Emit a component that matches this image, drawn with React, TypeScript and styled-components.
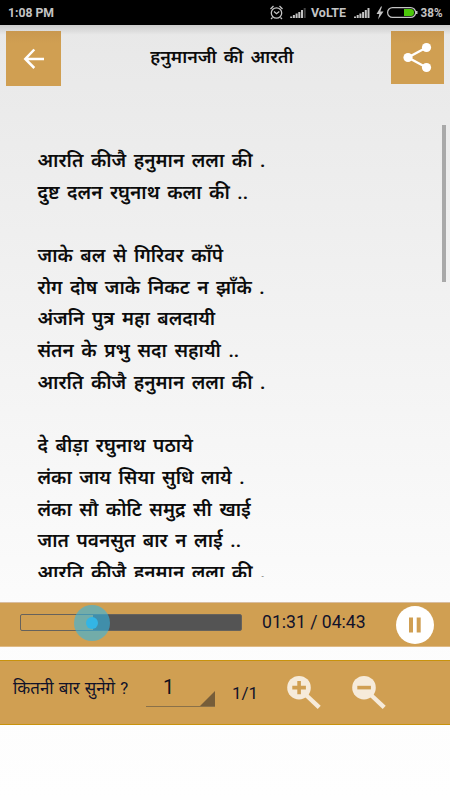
import React from "react";
import styled, { createGlobalStyle } from "styled-components";

const GlobalStyle = createGlobalStyle`
  * { box-sizing: border-box; }
  html, body { margin: 0; padding: 0; }
  body { overflow: hidden; }
`;

const deva = `Roboto, "Noto Sans", "Noto Sans Devanagari", sans-serif`;
const gold = "#d09f52";

const Screen = styled.div`
  width: 450px;
  height: 800px;
  display: flex;
  flex-direction: column;
  overflow: hidden;
  background: linear-gradient(#e8e8e8 25px, #fcfcfc 620px, #fefefe 100%);
  font-family: Roboto, sans-serif;
`;

const StatusBar = styled.div`
  height: 25px;
  flex: none;
  display: flex;
  align-items: center;
  justify-content: space-between;
  padding: 1px 8px 0;
  background: #000;
  color: #c4c4c4;
  font-size: 12.2px;
  font-weight: 700;
  line-height: 24px;
`;

const StatusIcons = styled.svg`
  display: block;
  width: 180px;
  height: 24px;
  margin-right: -8px;
  font-family: Roboto, sans-serif;
`;

const Header = styled.header`
  height: 100px;
  flex: none;
  display: flex;
  align-items: flex-start;
  justify-content: space-between;
  padding: 6px 6px 0;
  background: linear-gradient(rgba(0, 0, 0, 0.12), rgba(0, 0, 0, 0) 10px);
`;

const SquareButton = styled.button<{ $w: number; $h: number }>`
  width: ${(p) => p.$w}px;
  height: ${(p) => p.$h}px;
  padding: 0;
  border: 0;
  background: linear-gradient(#c9984f, ${gold} 12px);
  svg { display: block; }
`;

const Title = styled.h1`
  margin: 12px 8px 0 0;
  font: 600 17.9px/28px ${deva};
  word-spacing: 2.8px;
  color: #0c0c0c;
  white-space: nowrap;
`;

const LyricsPane = styled.main`
  height: 452px;
  flex: none;
  display: flex;
  justify-content: space-between;
  overflow: hidden;
`;

const Lyrics = styled.div`
  padding: 20px 0 0 37.5px;
  font: 600 19.05px/31.7px ${deva};
  word-spacing: 2.8px;
  color: #0c0c0c;
`;

const Line = styled.p`
  height: 31.7px;
  margin: 0;
  white-space: nowrap;
`;

const ScrollThumb = styled.div`
  width: 4px;
  height: 157px;
  margin-right: 4px;
  background: #a9a9a9;
`;

const PlayerBar = styled.section`
  height: 45px;
  flex: none;
  display: flex;
  align-items: center;
  margin-top: 25px;
  padding: 0 16px 0 20px;
  background: ${gold};
  border-top: 1px solid #d9bda0;
  border-bottom: 1px solid #dfba86;
`;

const Track = styled.div`
  position: relative;
  width: 222px;
  height: 17px;
  margin-top: -5px;
  border: 1px solid #66625c;
  border-radius: 2px;
  background: linear-gradient(90deg, transparent 72px, #545454 72px);
`;

const Halo = styled.div`
  position: absolute;
  left: 53px;
  top: -10px;
  width: 36px;
  height: 36px;
  display: grid;
  place-items: center;
  border-radius: 50%;
  background: rgba(51, 181, 229, 0.6);
`;

const Knob = styled.div`
  width: 12px;
  height: 12px;
  border-radius: 50%;
  background: #33b5e5;
`;

const Time = styled.span`
  width: 133px;
  margin: -6px 0 0 20px;
  font-size: 17.6px;
  line-height: 22px;
  color: #10122a;
  white-space: nowrap;
`;

const PauseButton = styled.button`
  width: 38px;
  height: 38px;
  padding: 0;
  border: 0;
  border-radius: 50%;
  background: #fff;
  margin-left: 1px;
  svg { display: block; }
`;

const RepeatBar = styled.section`
  height: 65px;
  flex: none;
  display: flex;
  align-items: flex-start;
  margin-top: 13px;
  padding-left: 13px;
  background: ${gold};
  border-top: 1px solid #c8920c;
  border-bottom: 1px solid #c8920c;
`;

const RepeatLabel = styled.span`
  width: 133px;
  padding-top: 13px;
  font: 400 16.9px/28px ${deva};
  word-spacing: 0.9px;
  color: #10122a;
  white-space: nowrap;
`;

const Spinner = styled.div`
  position: relative;
  width: 69px;
  height: 31px;
  margin-top: 15px;
  padding-left: 17px;
  border-bottom: 1px solid #8a7149;
  font-size: 20px;
  line-height: 23px;
  color: #10101a;
  &::after {
    content: "";
    position: absolute;
    right: 0;
    bottom: 0;
    border-bottom: 15px solid #765d39;
    border-left: 15px solid transparent;
  }
`;

const Count = styled.span`
  width: 55px;
  margin: 21px 0 0 17px;
  font-size: 17px;
  line-height: 22px;
  color: #10122a;
`;

const ZoomButton = styled.button`
  width: 65px;
  height: 40px;
  margin-top: 12px;
  padding: 0;
  border: 0;
  background: none;
  svg { display: block; }
`;

const lines = [
  "आरति कीजै हनुमान लला की .",
  "दुष्ट दलन रघुनाथ कला की ..",
  "",
  "जाके बल से गिरिवर काँपे",
  "रोग दोष जाके निकट न झाँके .",
  "अंजनि पुत्र महा बलदायी",
  "संतन के प्रभु सदा सहायी ..",
  "आरति कीजै हनुमान लला की .",
  "",
  "दे बीड़ा रघुनाथ पठाये",
  "लंका जाय सिया सुधि लाये .",
  "लंका सौ कोटि समुद्र सी खाई",
  "जात पवनसुत बार न लाई ..",
  "आरति कीजै हनुमान लला की .",
];

const Signal = ({ x, dim }: { x: number; dim?: boolean }) => (
  <g>
    {[1.5, 3, 4.5, 6, 8, 10].map((h, i) => (
      <rect key={i} x={x + i * 2.7} y={17 - h} width="2" height={h} fill={dim && i === 5 ? "#444" : "#c4c4c4"} />
    ))}
  </g>
);

const Magnifier = ({ plus }: { plus?: boolean }) => (
  <svg width="40" height="40" viewBox="0 0 40 40">
    <path d="M19.5 22.5 L32.2 34.4" stroke="#f6ebda" strokeWidth="4.4" />
    <circle cx="12" cy="14.7" r="11.8" fill="#f6ebda" />
    <path d={plus ? "M5.3 14.6H18.9M12.1 8V21.2" : "M5.3 14.6H18.9"} stroke={gold} strokeWidth="3.6" />
  </svg>
);

export default function App() {
  return (
    <Screen>
      <GlobalStyle />
      <StatusBar>
        <span>1:08 PM</span>
        <StatusIcons viewBox="0 0 180 24" fill="#c4c4c4" fontSize="12" fontWeight="700">
          <g fill="none" stroke="#c4c4c4" strokeWidth="1.3">
            <circle cx="6.5" cy="12" r="5.2" />
            <path d="M0.5 8 L3.5 5 M12.5 8 L9.5 5 M4 10.5 L6.5 12.7 L9.3 10.5 M2.5 16.5 L1 18 M10.5 16.5 L12 18" />
          </g>
          <Signal x={20.2} dim />
          <text x="41" y="16" textLength="35" lengthAdjust="spacingAndGlyphs">VoLTE</text>
          <Signal x={84} />
          <path d="M111 5.5 L106.5 13 H109.3 L108 18.5 L113.5 10.5 H110.3 L112 5.5Z" />
          <rect x="117.6" y="6.6" width="28" height="9.8" rx="4.9" fill="none" stroke="#c4c4c4" strokeWidth="1.2" />
          <path d="M134 8 H141 Q144 8 144 11.5 Q144 15 141 15 H134Z" fill="#4cc80a" />
          <path d="M146 10 h1.5 v3 h-1.5z" />
          <text x="150.5" y="16" textLength="22" lengthAdjust="spacingAndGlyphs">38%</text>
        </StatusIcons>
      </StatusBar>
      <Header>
        <SquareButton $w={55} $h={55} aria-label="Back">
          <svg width="55" height="55" fill="none" stroke="#fff" strokeWidth="2.5">
            <path d="M38 28H19.5M28.3 18.5L19.3 28L28.3 37" />
          </svg>
        </SquareButton>
        <Title>हनुमानजी की आरती</Title>
        <SquareButton $w={53} $h={53} aria-label="Share">
          <svg width="53" height="53" fill="#fff">
            <path d="M35.5 16.5L17 26.5L35.5 36.5" fill="none" stroke="#fff" strokeWidth="2.4" />
            <circle cx="35.5" cy="16.5" r="4.6" />
            <circle cx="17" cy="26.5" r="4.6" />
            <circle cx="35.5" cy="36.5" r="4.6" />
          </svg>
        </SquareButton>
      </Header>
      <LyricsPane>
        <Lyrics>
          {lines.map((l, i) => (
            <Line key={i}>{l}</Line>
          ))}
        </Lyrics>
        <ScrollThumb />
      </LyricsPane>
      <PlayerBar>
        <Track>
          <Halo>
            <Knob />
          </Halo>
        </Track>
        <Time>01:31 / 04:43</Time>
        <PauseButton aria-label="Pause">
          <svg width="38" height="38" fill={gold}>
            <rect x="13" y="11.5" width="4" height="15" />
            <rect x="20.7" y="11.5" width="4" height="15" />
          </svg>
        </PauseButton>
      </PlayerBar>
      <RepeatBar>
        <RepeatLabel>कितनी बार सुनेगे ?</RepeatLabel>
        <Spinner>1</Spinner>
        <Count>1/1</Count>
        <ZoomButton aria-label="Zoom in">
          <Magnifier plus />
        </ZoomButton>
        <ZoomButton aria-label="Zoom out">
          <Magnifier />
        </ZoomButton>
      </RepeatBar>
    </Screen>
  );
}
